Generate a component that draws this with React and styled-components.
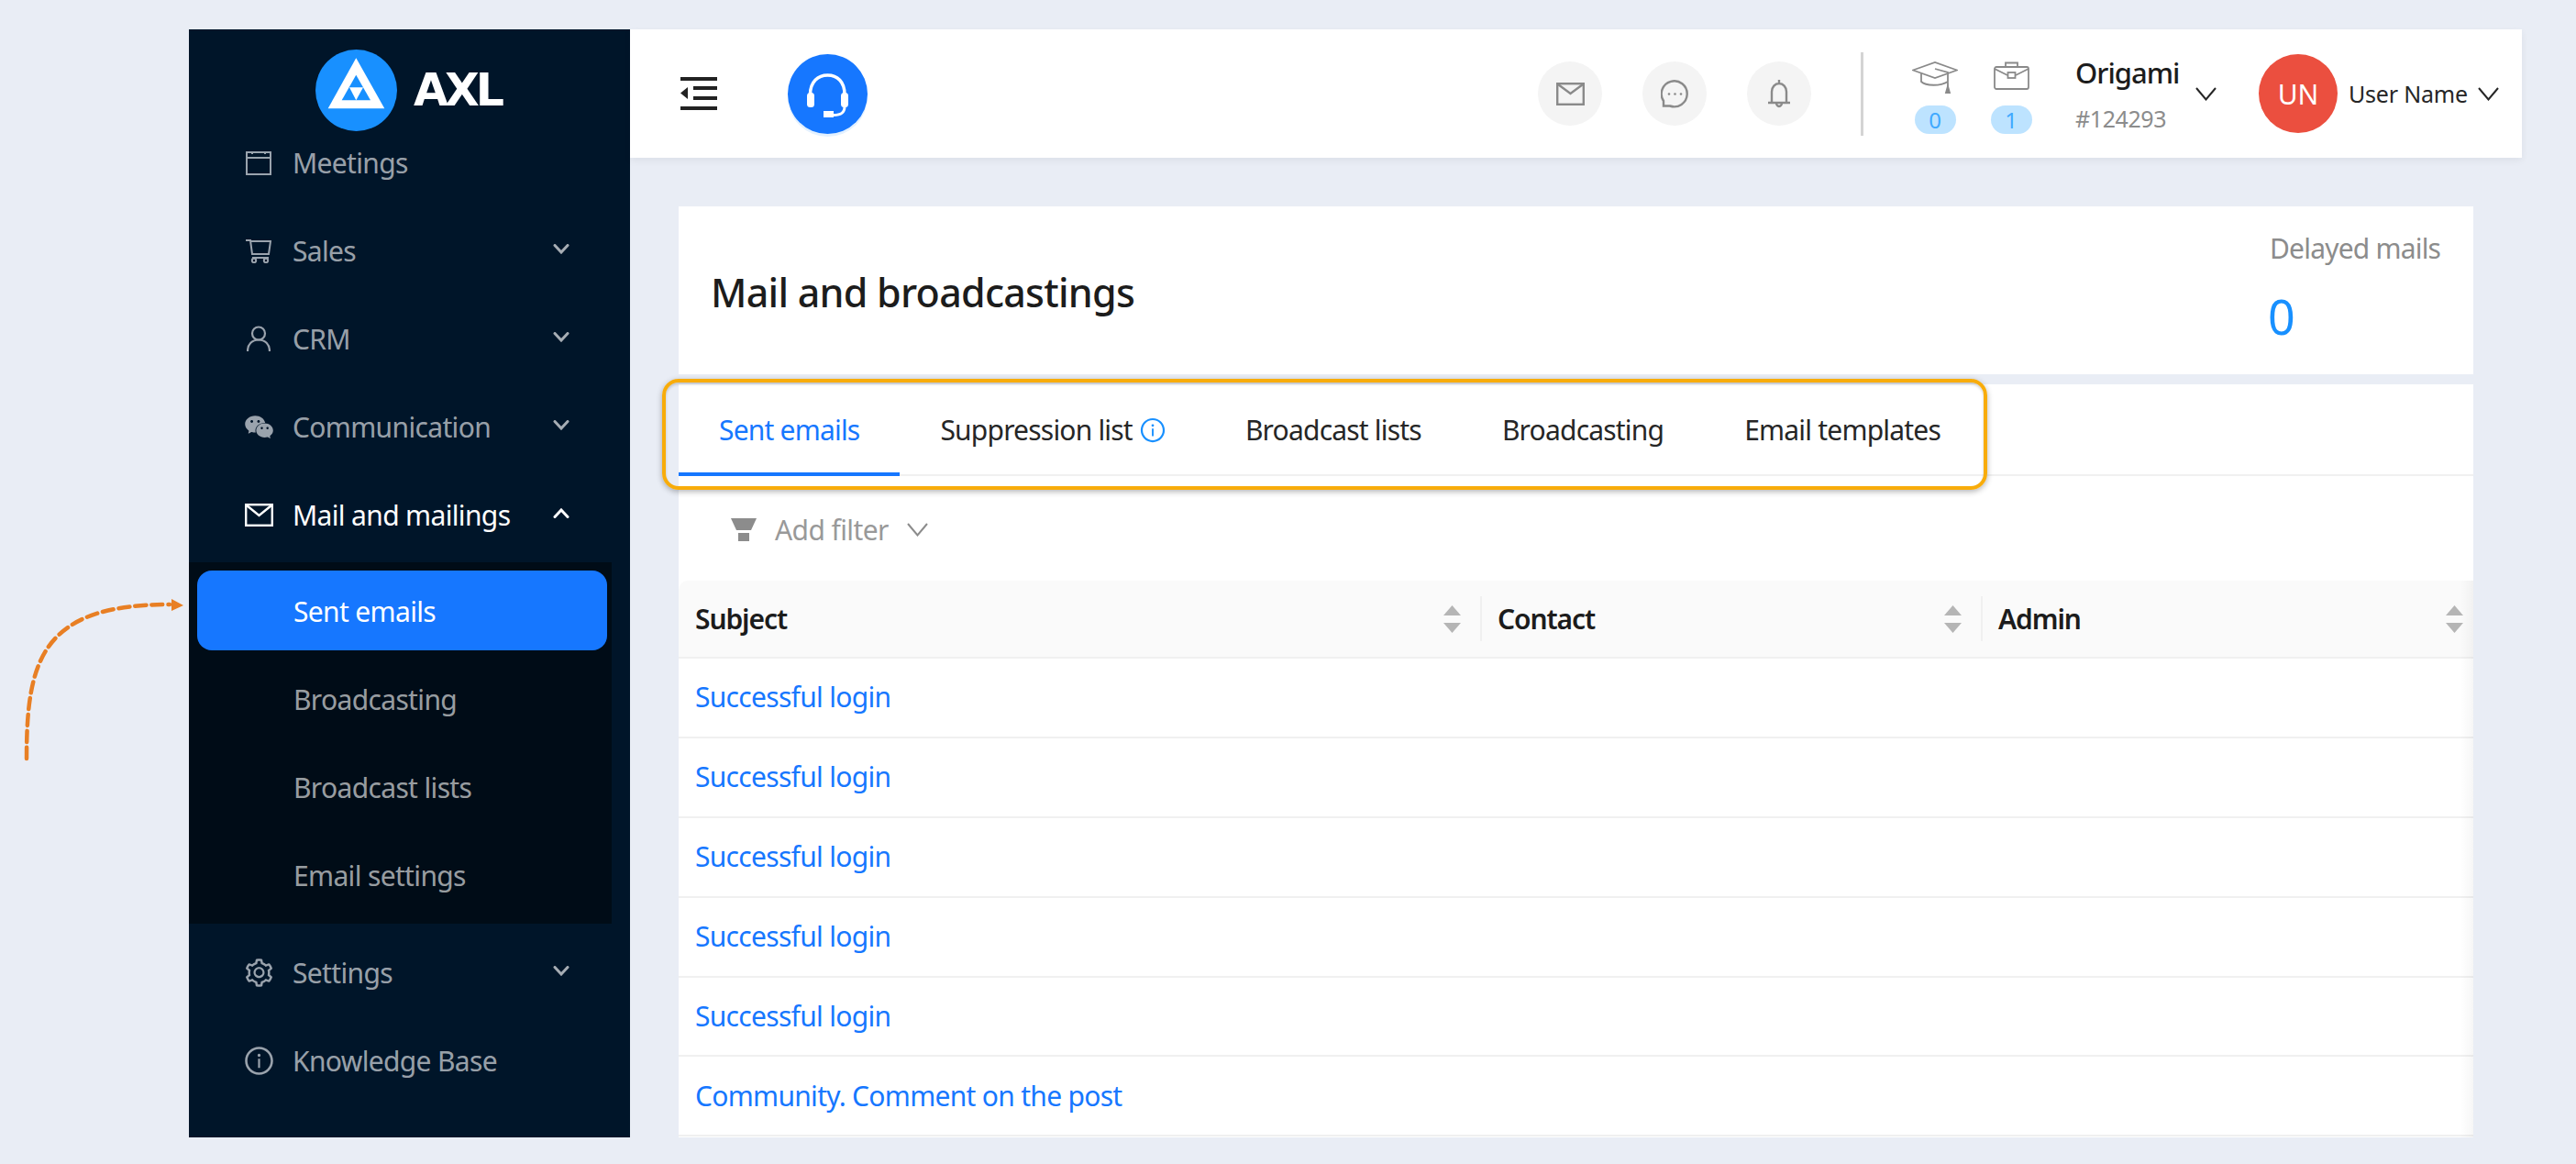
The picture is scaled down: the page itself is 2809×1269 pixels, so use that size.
import styled, { createGlobalStyle } from "styled-components";
import { AiFillWechat, AiOutlineSetting, AiOutlineInfoCircle } from "react-icons/ai";

const GlobalStyle = createGlobalStyle`
	html, body {
		margin: 0;
		padding: 0;
		background: #e9edf5;
		font-family: "Noto Sans", "Open Sans", sans-serif;
	}
	* {
		box-sizing: border-box;
	}
`;

const Page = styled.div`
	position: relative;
	width: 2809px;
	height: 1269px;
	padding: 32px 59px 29px 206px;
	display: flex;
	overflow: hidden;
`;

const CurvedArrow = styled.svg`
	position: absolute;
	left: 20px;
	top: 645px;
`;

const Sidebar = styled.aside`
	width: 481px;
	flex-shrink: 0;
	background: #001529;
	display: flex;
	flex-direction: column;
`;

const Logo = styled.div`
	height: 111px;
	padding: 22px 0 0 138px;
	display: flex;
	align-items: flex-start;
	gap: 18px;
`;

const LogoText = styled.span`
	font-family: "DejaVu Sans", sans-serif;
	font-weight: 700;
	font-size: 49px;
	line-height: 89px;
	letter-spacing: -4px;
	color: #fff;
`;

const Nav = styled.nav`
	display: flex;
	flex-direction: column;
	gap: 26px;
`;

const NavItem = styled.div`
	height: 70px;
	padding: 0 66px 2px 62px;
	display: flex;
	align-items: center;
	font-size: 30px;
	letter-spacing: -0.65px;
	color: ${(p) => (p.$open ? "#fff" : "rgba(255, 255, 255, 0.62)")};
`;

const NavIcon = styled.span`
	width: 28px;
	margin-right: 25px;
	display: flex;
	justify-content: center;
	align-items: center;
	font-size: 35px;
	color: #9aa3ad;
	svg {
		flex-shrink: 0;
	}
`;

const NavLabel = styled.span`
	flex: 1;
	margin-left: -2px;
`;

const NavCaret = styled.svg`
	margin-top: -4px;
	color: ${(p) => (p.$open ? "#fff" : "rgba(255, 255, 255, 0.65)")};
`;

const SubMenu = styled.div`
	width: 461px;
	margin: -10px 0 -7px;
	padding: 9px 0 10px;
	background: #000c17;
	display: flex;
	flex-direction: column;
	gap: 9px;
`;

const SubItem = styled.div`
	height: 87px;
	width: 447px;
	margin-left: 9px;
	padding: 2px 0 0 105px;
	border-radius: 16px;
	display: flex;
	align-items: center;
	font-size: 30px;
	letter-spacing: -0.65px;
	color: ${(p) => (p.$active ? "#fff" : "rgba(255, 255, 255, 0.62)")};
	background: ${(p) => (p.$active ? "#1677ff" : "transparent")};
`;

const Main = styled.main`
	flex: 1;
	display: flex;
	flex-direction: column;
	min-width: 0;
`;

const Header = styled.header`
	height: 140px;
	flex-shrink: 0;
	padding: 0 25px 0 55px;
	background: #fff;
	box-shadow: 0 3px 8px rgba(0, 21, 41, 0.06);
	display: flex;
	align-items: center;
`;

const SupportButton = styled.div`
	width: 87px;
	height: 87px;
	margin-left: 77px;
	border-radius: 50%;
	background: #1677ff;
	box-shadow: 0 3px 0 #e3f1ff;
	display: flex;
`;

const HeaderActions = styled.div`
	margin-left: auto;
	display: flex;
	align-items: center;
	gap: 44px;
`;

const RoundButton = styled.div`
	width: 70px;
	height: 70px;
	border-radius: 50%;
	background: #f4f4f4;
	display: flex;
	align-items: center;
	justify-content: center;
`;

const Divider = styled.div`
	width: 3px;
	height: 91px;
	margin: 0 53px 0 54px;
	background: #d4d4d4;
`;

const Counters = styled.div`
	display: flex;
	gap: 33px;
	margin-right: 45px;
`;

const Counter = styled.div`
	width: 50px;
	height: 87px;
	padding-top: 8px;
	display: flex;
	flex-direction: column;
	align-items: center;
	justify-content: space-between;
`;

const CounterBadge = styled.span`
	width: 45px;
	height: 31px;
	border-radius: 16px;
	background: #bde3ff;
	color: #40a9ff;
	font-size: 24px;
	line-height: 31px;
	text-align: center;
`;

const Account = styled.div`
	width: 131px;
	display: flex;
	flex-direction: column;
	gap: 14px;
`;

const AccountName = styled.span`
	font-size: 31px;
	line-height: 40px;
	font-weight: 500;
	letter-spacing: -1px;
	color: #1c1c1c;
`;

const AccountId = styled.span`
	font-size: 25px;
	line-height: 32px;
	letter-spacing: -0.4px;
	color: #8c8c8c;
`;

const Avatar = styled.div`
	width: 86px;
	height: 86px;
	margin: 0 12px 0 46px;
	border-radius: 50%;
	background: #eb4f3f;
	color: #fff;
	font-size: 30px;
	display: flex;
	align-items: center;
	justify-content: center;
`;

const UserName = styled.span`
	width: 141px;
	font-size: 25px;
	letter-spacing: -0.2px;
	color: #262626;
`;

const Content = styled.div`
	flex: 1;
	min-height: 0;
	padding: 53px 53px 0;
	display: flex;
	flex-direction: column;
	gap: 11px;
`;

const TitleCard = styled.section`
	height: 183px;
	flex-shrink: 0;
	padding: 0 35px 0 35px;
	background: #fff;
	display: flex;
	align-items: center;
	justify-content: space-between;
`;

const Title = styled.h1`
	margin: 3px 0 0;
	font-size: 43px;
	font-weight: 500;
	letter-spacing: -0.75px;
	color: #1c1c1c;
`;

const Stat = styled.div`
	width: 187px;
	align-self: flex-start;
	padding-top: 25px;
`;

const StatLabel = styled.div`
	font-size: 30px;
	line-height: 42px;
	letter-spacing: -0.8px;
	white-space: nowrap;
	color: #8c8c8c;
`;

const StatValue = styled.div`
	margin: 18px 0 0 -2px;
	font-size: 52px;
	line-height: 70px;
	color: #1890ff;
`;

const TableCard = styled.section`
	flex: 1;
	min-height: 0;
	background: #fff;
	display: flex;
	flex-direction: column;
`;

const TabBar = styled.div`
	height: 100px;
	flex-shrink: 0;
	border-bottom: 2px solid #f0f0f0;
	display: flex;
`;

const TabList = styled.div`
	position: relative;
	display: flex;
`;

const Highlight = styled.div`
	position: absolute;
	left: -18px;
	right: -7px;
	top: -6px;
	height: 121px;
	border: 4px solid #f8ac0a;
	border-radius: 18px;
	box-shadow: 0 2px 6px rgba(0, 0, 0, 0.3), inset 0 2px 3px rgba(0, 0, 0, 0.18);
	pointer-events: none;
`;

const Tab = styled.div`
	height: 100px;
	padding: 3px 44px 0;
	display: flex;
	align-items: center;
	gap: 7px;
	font-size: 30px;
	letter-spacing: -0.8px;
	white-space: nowrap;
	color: ${(p) => (p.$active ? "#1677ff" : "#262626")};
	border-bottom: 4px solid ${(p) => (p.$active ? "#1677ff" : "transparent")};
`;

const TabInfo = styled.span`
	display: flex;
	margin-right: -2px;
	font-size: 30px;
	color: #1890ff;
	svg {
		flex-shrink: 0;
	}
`;

const FilterRow = styled.div`
	height: 114px;
	flex-shrink: 0;
	padding: 2px 0 0 57px;
	display: flex;
	align-items: center;
	font-size: 30px;
	letter-spacing: -0.6px;
	color: #999;
`;

const FilterLabel = styled.span`
	margin: 0 20px 0 20px;
`;

const Table = styled.div`
	position: relative;
	flex: 1;
	min-height: 0;
	overflow: hidden;
	&::after {
		content: "";
		position: absolute;
		top: 0;
		right: 0;
		bottom: 0;
		width: 14px;
		background: linear-gradient(to left, rgba(0, 0, 0, 0.035), rgba(0, 0, 0, 0));
	}
`;

const HeadRow = styled.div`
	height: 85px;
	background: #fafafa;
	border-bottom: 2px solid #f0f0f0;
	border-radius: 10px 0 0 0;
	display: grid;
	grid-template-columns: 874px 546px 1fr;
`;

const HeadCell = styled.div`
	position: relative;
	padding: 0 ${(p) => (p.$last ? 11 : 21)}px 0 ${(p) => (p.$first ? 18 : 19)}px;
	display: flex;
	align-items: center;
	justify-content: space-between;
	font-size: 30px;
	font-weight: 600;
	letter-spacing: -1.1px;
	color: #1c1c1c;
	&::before {
		content: "";
		display: ${(p) => (p.$first ? "none" : "block")};
		position: absolute;
		left: 0;
		top: 17px;
		height: 49px;
		width: 2px;
		background: #f0f0f0;
	}
`;

const Row = styled.div`
	height: 86.9px;
	padding: 0 18px 1px;
	border-bottom: 2px solid #f0f0f0;
	display: flex;
	align-items: center;
`;

const RowLink = styled.a`
	font-size: 30px;
	letter-spacing: -0.7px;
	color: #1677ff;
`;

const caret = (open) => (
	<NavCaret $open={open} width="18" height="11" viewBox="0 0 18 11" fill="none" stroke="currentColor" strokeWidth="3" strokeLinecap="round">
		<path d={open ? "M2 9.5 L9 2 L16 9.5" : "M2 1.5 L9 9 L16 1.5"} />
	</NavCaret>
);

const ThinChevron = ({ color }) => (
	<svg width="23" height="15" viewBox="0 0 23 15" fill="none" stroke={color} strokeWidth="2">
		<path d="M1 1 L11.5 13.5 L22 1" />
	</svg>
);

const Sorter = () => (
	<svg width="19" height="30" viewBox="0 0 19 30" fill="#b5b5b5">
		<path d="M9.5 0 L19 11 H0 Z" />
		<path d="M0 19 H19 L9.5 30 Z" />
	</svg>
);

const LineIcon = ({ w, h, children, color = "#8a8a8a", sw = 2.4 }) => (
	<svg width={w} height={h} viewBox={`0 0 ${w} ${h}`} fill="none" stroke={color} strokeWidth={sw}>
		{children}
	</svg>
);

const navBefore = [
	{
		label: "Sales",
		icon: (
			<LineIcon w={28} h={27} color="#9aa3ad" sw={2}>
				<path d="M0 2 H5 L7 17 H25 L27 3 H5.5 M7 21 H25" />
				<circle cx="9" cy="24" r="2.2" />
				<circle cx="22" cy="24" r="2.2" />
			</LineIcon>
		),
	},
	{
		label: "CRM",
		icon: (
			<LineIcon w={26} h={28} color="#9aa3ad" sw={2.2}>
				<circle cx="13" cy="8.5" r="7" />
				<path d="M1 28 C1 20 6 15.5 13 15.5 C20 15.5 25 20 25 28" />
			</LineIcon>
		),
	},
	{ label: "Communication", icon: <AiFillWechat /> },
];

const subItems = ["Sent emails", "Broadcasting", "Broadcast lists", "Email settings"];
const rows = ["Successful login", "Successful login", "Successful login", "Successful login", "Successful login", "Community. Comment on the post"];

export default function App() {
	return (
		<Page>
			<GlobalStyle />
			<CurvedArrow width="190" height="190" viewBox="0 0 190 190" fill="none">
				<path d="M9 182 C9 75 25 14 165 14" stroke="#e87f24" strokeWidth="4.5" strokeDasharray="12 6" strokeLinecap="round" />
				<path d="M167 8 L180 15 L167 21 Z" fill="#e87f24" />
			</CurvedArrow>

			<Sidebar>
				<Logo>
					<svg width="89" height="89" viewBox="0 0 89 89">
						<circle cx="44.5" cy="44.5" r="44.5" fill="#1890ff" />
						<path d="M44.3 9.3 L75.3 64.3 H13.7 Z" fill="#fff" />
						<path d="M44.3 27.7 L60 55.3 H28.7 Z" fill="#1890ff" />
						<path d="M37 41.3 H52 L44.3 55.3 Z" fill="#fff" />
					</svg>
					<LogoText>AXL</LogoText>
				</Logo>
				<Nav>
					<NavItem>
						<NavIcon>
							<LineIcon w={28} h={27} color="#9aa3ad" sw={2}>
								<rect x="1" y="2" width="26" height="24" />
								<path d="M1 8 H27 M7 1 V4 M21 1 V4" />
							</LineIcon>
						</NavIcon>
						<NavLabel>Meetings</NavLabel>
					</NavItem>
					{navBefore.map((item) => (
						<NavItem key={item.label}>
							<NavIcon>{item.icon}</NavIcon>
							<NavLabel>{item.label}</NavLabel>
							{caret(false)}
						</NavItem>
					))}
					<NavItem $open>
						<NavIcon>
							<LineIcon w={31} h={25} color="#fff" sw={2.4}>
								<rect x="1.2" y="1.2" width="28.6" height="22.6" />
								<path d="M2 2 L15.5 13 L29 2" />
							</LineIcon>
						</NavIcon>
						<NavLabel>Mail and mailings</NavLabel>
						{caret(true)}
					</NavItem>
					<SubMenu>
						{subItems.map((label, i) => (
							<SubItem key={label} $active={i === 0}>
								{label}
							</SubItem>
						))}
					</SubMenu>
					<NavItem>
						<NavIcon>
							<AiOutlineSetting />
						</NavIcon>
						<NavLabel>Settings</NavLabel>
						{caret(false)}
					</NavItem>
					<NavItem>
						<NavIcon>
							<AiOutlineInfoCircle />
						</NavIcon>
						<NavLabel>Knowledge Base</NavLabel>
					</NavItem>
				</Nav>
			</Sidebar>

			<Main>
				<Header>
					<svg width="40" height="36" viewBox="0 0 40 36" fill="#222">
						<rect x="0" y="0" width="40" height="4" />
						<rect x="14" y="10" width="26" height="4" />
						<rect x="14" y="21" width="26" height="4" />
						<rect x="0" y="32" width="40" height="4" />
						<path d="M8 11 V24 L0 17.5 Z" />
					</svg>
					<SupportButton>
						<svg width="87" height="87" viewBox="0 0 87 87" fill="#fff">
							<path d="M24.5 44 C24.5 30 33 23 43.5 23 C54 23 62 30 62 44" fill="none" stroke="#fff" strokeWidth="3.5" />
							<rect x="21" y="42" width="8" height="16" rx="3.5" />
							<rect x="58" y="42" width="8" height="16" rx="3.5" />
							<path d="M62 57 C62 64 58 66.5 50 66.5" fill="none" stroke="#fff" strokeWidth="3" />
							<rect x="39" y="62" width="11" height="7" />
						</svg>
					</SupportButton>
					<HeaderActions>
						<RoundButton>
							<LineIcon w={31} h={25}>
								<rect x="1.2" y="1.2" width="28.6" height="22.6" />
								<path d="M2 2 L15.5 12 L29 2" />
							</LineIcon>
						</RoundButton>
						<RoundButton>
							<LineIcon w={31} h={31}>
								<path d="M3 28.5 L3 23 A14 14 0 1 1 10 28.5 Z" />
								<circle cx="9" cy="15.5" r="1.3" fill="#8a8a8a" stroke="none" />
								<circle cx="15.5" cy="15.5" r="1.3" fill="#8a8a8a" stroke="none" />
								<circle cx="22" cy="15.5" r="1.3" fill="#8a8a8a" stroke="none" />
							</LineIcon>
						</RoundButton>
						<RoundButton>
							<LineIcon w={24} h={31}>
								<path d="M0 25 H24 M4 25 V13 A8 9 0 0 1 20 13 V25 M12 0 V4 M9 25 A3 4 0 0 0 15 25" />
							</LineIcon>
						</RoundButton>
					</HeaderActions>
					<Divider />
					<Counters>
						<Counter>
							<LineIcon w={50} h={35} sw={1.8}>
								<path d="M1 9.5 L25 1 L49 9.5 L25 18 Z" />
								<path d="M10 13 V22 C15 27 31 27 39 22 V13 M25 8 L39 12 V28" />
								<path d="M37 34 L39 27 L41 34 Z" fill="#8a8a8a" />
							</LineIcon>
							<CounterBadge>0</CounterBadge>
						</Counter>
						<Counter>
							<LineIcon w={39} h={31} sw={1.8}>
								<rect x="1" y="6" width="37" height="24" rx="2" />
								<path d="M13 6 V1.5 H26 V6 M1 8 L15 15 M38 8 L24 15" />
								<rect x="15.5" y="12" width="8" height="6" />
							</LineIcon>
							<CounterBadge>1</CounterBadge>
						</Counter>
					</Counters>
					<Account>
						<AccountName>Origami</AccountName>
						<AccountId>#124293</AccountId>
					</Account>
					<ThinChevron color="#262626" />
					<Avatar>UN</Avatar>
					<UserName>User Name</UserName>
					<ThinChevron color="#262626" />
				</Header>

				<Content>
					<TitleCard>
						<Title>Mail and broadcastings</Title>
						<Stat>
							<StatLabel>Delayed mails</StatLabel>
							<StatValue>0</StatValue>
						</Stat>
					</TitleCard>

					<TableCard>
						<TabBar>
							<TabList>
								<Highlight />
								<Tab $active>Sent emails</Tab>
								<Tab>
									Suppression list
									<TabInfo>
										<AiOutlineInfoCircle />
									</TabInfo>
								</Tab>
								<Tab>Broadcast lists</Tab>
								<Tab>Broadcasting</Tab>
								<Tab>Email templates</Tab>
							</TabList>
						</TabBar>
						<FilterRow>
							<svg width="28" height="25" viewBox="0 0 28 25" fill="#8c8c8c">
								<path d="M0 0 H28 L22 13 H6 Z" />
								<rect x="8" y="16" width="12" height="9" />
							</svg>
							<FilterLabel>Add filter</FilterLabel>
							<ThinChevron color="#8c8c8c" />
						</FilterRow>
						<Table>
							<HeadRow>
								<HeadCell $first>
									Subject
									<Sorter />
								</HeadCell>
								<HeadCell>
									Contact
									<Sorter />
								</HeadCell>
								<HeadCell $last>
									Admin
									<Sorter />
								</HeadCell>
							</HeadRow>
							{rows.map((text, i) => (
								<Row key={i}>
									<RowLink>{text}</RowLink>
								</Row>
							))}
						</Table>
					</TableCard>
				</Content>
			</Main>
		</Page>
	);
}
